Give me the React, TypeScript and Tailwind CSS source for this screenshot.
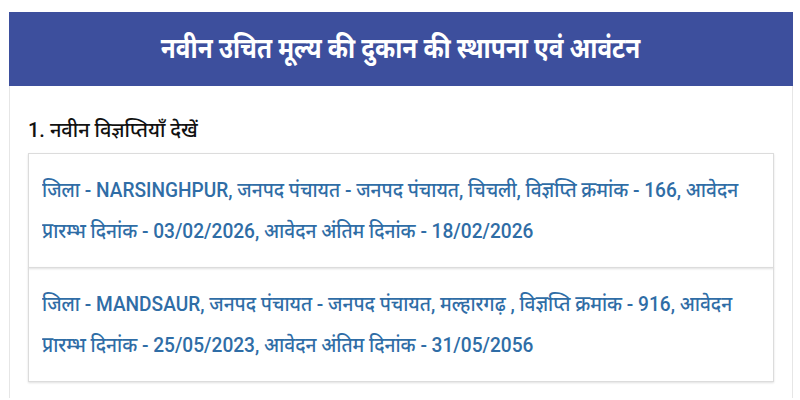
const notices = [
  {
    line1: "जिला - NARSINGHPUR, जनपद पंचायत - जनपद पंचायत, चिचली, विज्ञप्ति क्रमांक - 166, आवेदन",
    line2: "प्रारम्भ दिनांक - 03/02/2026, आवेदन अंतिम दिनांक - 18/02/2026",
  },
  {
    line1: "जिला - MANDSAUR, जनपद पंचायत - जनपद पंचायत, मल्हारगढ़ , विज्ञप्ति क्रमांक - 916, आवेदन",
    line2: "प्रारम्भ दिनांक - 25/05/2023, आवेदन अंतिम दिनांक - 31/05/2056",
  },
];

export default function App() {
  return (
    <div className="h-[400px] w-[800px] overflow-hidden bg-white pt-3 pl-[9px] pr-[7px] font-['Roboto','Noto_Sans',sans-serif]">
      <div className="flex h-[74px] items-center justify-center bg-[#3d4f9d]">
        <h1 className="scale-x-[0.87] whitespace-nowrap text-[28px] font-bold text-white">
          नवीन उचित मूल्य की दुकान की स्थापना एवं आवंटन
        </h1>
      </div>
      <div className="border-x border-[#e6e6e6] px-[18px] pb-4 pt-[32px]">
        <h2 className="mb-[11px] text-[20px] font-medium leading-6 text-[#111]">1. नवीन विज्ञप्तियाँ देखें</h2>
        <div className="flex w-[746px] flex-col">
          {notices.map((n) => (
            <a
              key={n.line1}
              className="-mt-px block border border-[#dcdcdc] px-[13px] pb-[15px] pt-[16px] text-[21px] font-medium leading-[41px] text-[#2f6da6] shadow-[0_1px_2px_rgba(0,0,0,0.12)] first:mt-0"
            >
              <span className="block origin-left scale-x-[0.91] whitespace-nowrap">{n.line1}</span>
              <span className="block origin-left scale-x-[0.91] whitespace-nowrap">{n.line2}</span>
            </a>
          ))}
        </div>
      </div>
    </div>
  );
}
